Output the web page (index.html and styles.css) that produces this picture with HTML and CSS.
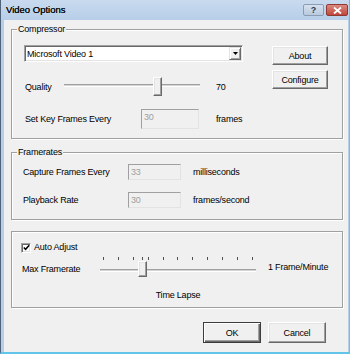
FILE: index.html
```html
<!DOCTYPE html>
<html lang="en">
<head>
  <meta charset="UTF-8">
  <title>Video Options</title>
  <link rel="stylesheet" href="styles.css">
</head>
<body>
  <div class="window">
    <div class="titlebar">
      <span class="title">Video Options</span>
      <div class="caption-btns">
        <span class="cap-btn help">?</span>
        <span class="cap-btn close">
          <svg width="9" height="7" viewBox="0 0 9 7"><path d="M1 0.5 L8 6.5 M8 0.5 L1 6.5" stroke="#fff" stroke-width="1.8"/></svg>
        </span>
      </div>
    </div>

    <div class="client">
      <div class="group group-compressor">
        <span class="group-title">Compressor</span>
        <div class="compressor-left">
          <div class="combo">
            <span class="combo-text">Microsoft Video 1</span>
            <span class="combo-arrow">
              <svg width="5" height="3" viewBox="0 0 5 3"><path d="M0 0 H5 L2.5 3 Z" fill="#000"/></svg>
            </span>
          </div>
          <div class="row row-quality">
            <span class="label quality-label">Quality</span>
            <div class="slider quality-slider">
              <div class="track"></div>
              <div class="thumb" style="--pos: 0.7"></div>
            </div>
            <span class="value">70</span>
          </div>
          <div class="row row-keyframes">
            <span class="label keyframes-label">Set Key Frames Every</span>
            <div class="field keyframes-field">30</div>
            <span class="unit">frames</span>
          </div>
        </div>
        <div class="compressor-right">
          <button class="btn side-btn">About</button>
          <button class="btn side-btn">Configure</button>
        </div>
      </div>

      <div class="group group-framerates">
        <span class="group-title">Framerates</span>
        <div class="row rate-row">
          <span class="label rate-label">Capture Frames Every</span>
          <div class="field rate-field">33</div>
          <span class="unit rate-unit">milliseconds</span>
        </div>
        <div class="row rate-row second">
          <span class="label rate-label">Playback Rate</span>
          <div class="field rate-field">30</div>
          <span class="unit rate-unit">frames/second</span>
        </div>
      </div>

      <div class="group group-lapse">
        <div class="check-row">
          <span class="checkbox">
            <svg width="7" height="7" viewBox="0 0 7 7"><path d="M0.8 3.4 L2.6 5.3 L6.2 1.2" stroke="#000" stroke-width="1.5" fill="none"/></svg>
          </span>
          <span class="check-label">Auto Adjust</span>
        </div>
        <div class="lapse-grid">
          <span class="lapse-label">Max Framerate</span>
          <div class="slider lapse-slider">
            <div class="ticks">
              <i></i><i></i><i></i><i></i><i></i><i></i><i></i><i></i><i></i><i></i><i></i>
            </div>
            <div class="track"></div>
            <div class="thumb" style="--pos: 0.26"></div>
          </div>
          <span class="lapse-value">1 Frame/Minute</span>
          <span class="lapse-caption">Time Lapse</span>
        </div>
      </div>

      <div class="footer">
        <button class="btn footer-btn default">OK</button>
        <button class="btn footer-btn">Cancel</button>
      </div>
    </div>
  </div>
</body>
</html>
```

FILE: styles.css
```css
body {
  margin: 0;
  background: #ffffff;
  font-family: "Liberation Sans", Arial, sans-serif;
  font-size: 9px;
  letter-spacing: -0.2px;
  color: #000;
}

.window {
  width: 350px;
  height: 354px;
  box-sizing: border-box;
  display: flex;
  flex-direction: column;
  background: #b7cee9;
  border-left: 1px solid #50627a;
  border-right: 1px solid #63c4ea;
  border-bottom: 2px solid #63c4ea;
}

/* title bar */
.titlebar {
  height: 20px;
  flex: none;
  display: flex;
  align-items: flex-start;
  padding: 0 1px 0 5px;
  background: linear-gradient(#c9daee, #b7cee9);
}

.title {
  flex: 1;
  font-size: 9.5px;
  line-height: 20px;
  letter-spacing: 0;
  color: #111;
  text-shadow: 0 0 0.4px #000;
}

.caption-btns {
  display: flex;
  gap: 2px;
  margin-top: 4px;
}

.cap-btn {
  height: 12px;
  box-sizing: border-box;
  display: flex;
  align-items: center;
  justify-content: center;
  border-radius: 2px;
}

.cap-btn.help {
  width: 21px;
  background: linear-gradient(#d6e1ef, #b8c9df);
  border: 1px solid #8b9db5;
  color: #2e3a48;
  font-weight: bold;
  font-size: 9px;
}

.cap-btn.close {
  width: 22px;
  background: linear-gradient(#dc8a80, #c2463b);
  border: 1px solid #8e3a33;
}

/* client area */
.client {
  flex: 1;
  margin: 0 1px 0 3px;
  padding: 9px 5px 0 7px;
  background: #f0f0f0;
  display: flex;
  flex-direction: column;
}

.group {
  position: relative;
  box-sizing: border-box;
  border: 1px solid #a0a0a0;
  box-shadow: inset 1px 1px #fff, 1px 1px #fff;
}

.group-title {
  position: absolute;
  top: -7px;
  left: 5px;
  padding: 0 1px;
  line-height: 12px;
  background: #f0f0f0;
}

.row {
  display: flex;
  align-items: center;
}

.label,
.value,
.unit {
  line-height: 11px;
  white-space: nowrap;
}

/* compressor */
.group-compressor {
  height: 110px;
  display: flex;
  padding: 15px 0 0 12px;
}

.compressor-left {
  width: 219px;
  display: flex;
  flex-direction: column;
}

.combo {
  height: 17px;
  box-sizing: border-box;
  display: flex;
  align-items: center;
  background: #fff;
  border: 1px solid;
  border-color: #a0a0a0 #fff #fff #a0a0a0;
  box-shadow: inset 1px 1px #696969, inset -1px -1px #e3e3e3;
  padding: 0 1px 0 2px;
}

.combo-text {
  flex: 1;
}

.combo-arrow {
  width: 12px;
  height: 13px;
  box-sizing: border-box;
  display: flex;
  align-items: center;
  justify-content: center;
  background: #f0f0f0;
  border: 1px solid;
  border-color: #e3e3e3 #696969 #696969 #e3e3e3;
  box-shadow: inset 1px 1px #fff, inset -1px -1px #a0a0a0;
}

.row-quality {
  margin-top: 15px;
  height: 20px;
}

.quality-label {
  width: 39px;
  padding-left: 1px;
}

.value {
  margin-left: 16px;
}

.row-keyframes {
  margin-top: 12px;
  height: 20px;
}

.keyframes-label {
  width: 116px;
  padding-left: 1px;
}

.unit {
  margin-left: 17px;
}

.compressor-right {
  margin-left: 29px;
  padding-top: 1px;
  display: flex;
  flex-direction: column;
  gap: 5px;
}

/* sliders */
.slider {
  position: relative;
  box-sizing: border-box;
}

.track {
  height: 1px;
  background: #d4d4d4;
  border-top: 1px solid #a0a0a0;
  border-bottom: 1px solid #fff;
}

.thumb {
  position: absolute;
  top: 0;
  left: calc(var(--pos) * (100% - 9px));
  width: 9px;
  height: 19px;
  box-sizing: border-box;
  background: #f0f0f0;
  border: 1px solid;
  border-color: #fff #696969 #696969 #fff;
  box-shadow: inset -1px -1px #a0a0a0, inset 1px 1px #e3e3e3;
}

.quality-slider {
  width: 136px;
  height: 20px;
  padding-top: 7px;
}

.lapse-slider {
  width: 156px;
  height: 24px;
  padding-top: 14px;
}

.lapse-slider .thumb {
  top: 6px;
  height: 16px;
}

.lapse-slider .thumb::before {
  content: "";
  position: absolute;
  top: -5px;
  left: 3px;
  width: 1px;
  height: 3px;
  background: #505050;
}

.ticks {
  position: absolute;
  top: 2px;
  left: 3px;
  right: 3px;
  display: flex;
  justify-content: space-between;
}

.ticks i {
  width: 1px;
  height: 3px;
  background: #505050;
}

/* fields */
.field {
  box-sizing: border-box;
  background: #f0f0f0;
  color: #a0a0a0;
  border: 1px solid;
  border-color: #a0a0a0 #e3e3e3 #e3e3e3 #a0a0a0;
  padding-left: 2px;
  line-height: 11px;
}

.keyframes-field {
  width: 58px;
  height: 20px;
  align-self: flex-start;
  padding-top: 2px;
}

/* framerates */
.group-framerates {
  margin-top: 13px;
  height: 68px;
  padding: 11px 0 0 11px;
}

.rate-row {
  height: 16px;
}

.rate-row.second {
  margin-top: 12px;
}

.rate-label {
  width: 105px;
}

.rate-field {
  width: 53px;
  height: 16px;
  padding-top: 2px;
}

.rate-unit {
  margin-left: 12px;
}

/* time lapse */
.group-lapse {
  margin-top: 11px;
  height: 77px;
  padding: 9px 0 0 9px;
}

.check-row {
  height: 13px;
  display: flex;
  align-items: center;
}

.checkbox {
  width: 10px;
  height: 10px;
  box-sizing: border-box;
  display: flex;
  align-items: center;
  justify-content: center;
  background: #fff;
  border: 1px solid;
  border-color: #a0a0a0 #fff #fff #a0a0a0;
  box-shadow: inset 1px 1px #696969, inset -1px -1px #e3e3e3;
}

.check-label {
  margin-left: 3px;
  line-height: 11px;
}

.lapse-grid {
  margin-top: 1px;
  display: grid;
  grid-template-columns: 79px 156px auto;
  grid-template-rows: 24px 12px;
  row-gap: 10px;
  align-items: center;
}

.lapse-label {
  padding: 4px 0 0 1px;
  line-height: 11px;
}

.lapse-value {
  margin-left: 12px;
  padding-top: 1px;
  line-height: 11px;
  white-space: nowrap;
}

.lapse-caption {
  grid-column: 2;
  justify-self: center;
  line-height: 12px;
}

/* buttons */
.btn {
  font: inherit;
  letter-spacing: inherit;
  color: #000;
  padding: 0;
  background: #f0f0f0;
  box-sizing: border-box;
  border: 1px solid;
  border-color: #fff #696969 #696969 #fff;
  box-shadow: inset -1px -1px #a0a0a0, inset 1px 1px #e3e3e3;
}

.side-btn {
  width: 56px;
  height: 19px;
}

.footer {
  margin-top: 14px;
  padding-right: 17px;
  display: flex;
  justify-content: flex-end;
  gap: 7px;
}

.footer-btn {
  width: 58px;
  height: 21px;
}

.footer-btn.default {
  border-color: #3c3c3c;
  box-shadow: inset 1px 1px #fff, inset -1px -1px #696969, inset -2px -2px #a0a0a0;
}
```
